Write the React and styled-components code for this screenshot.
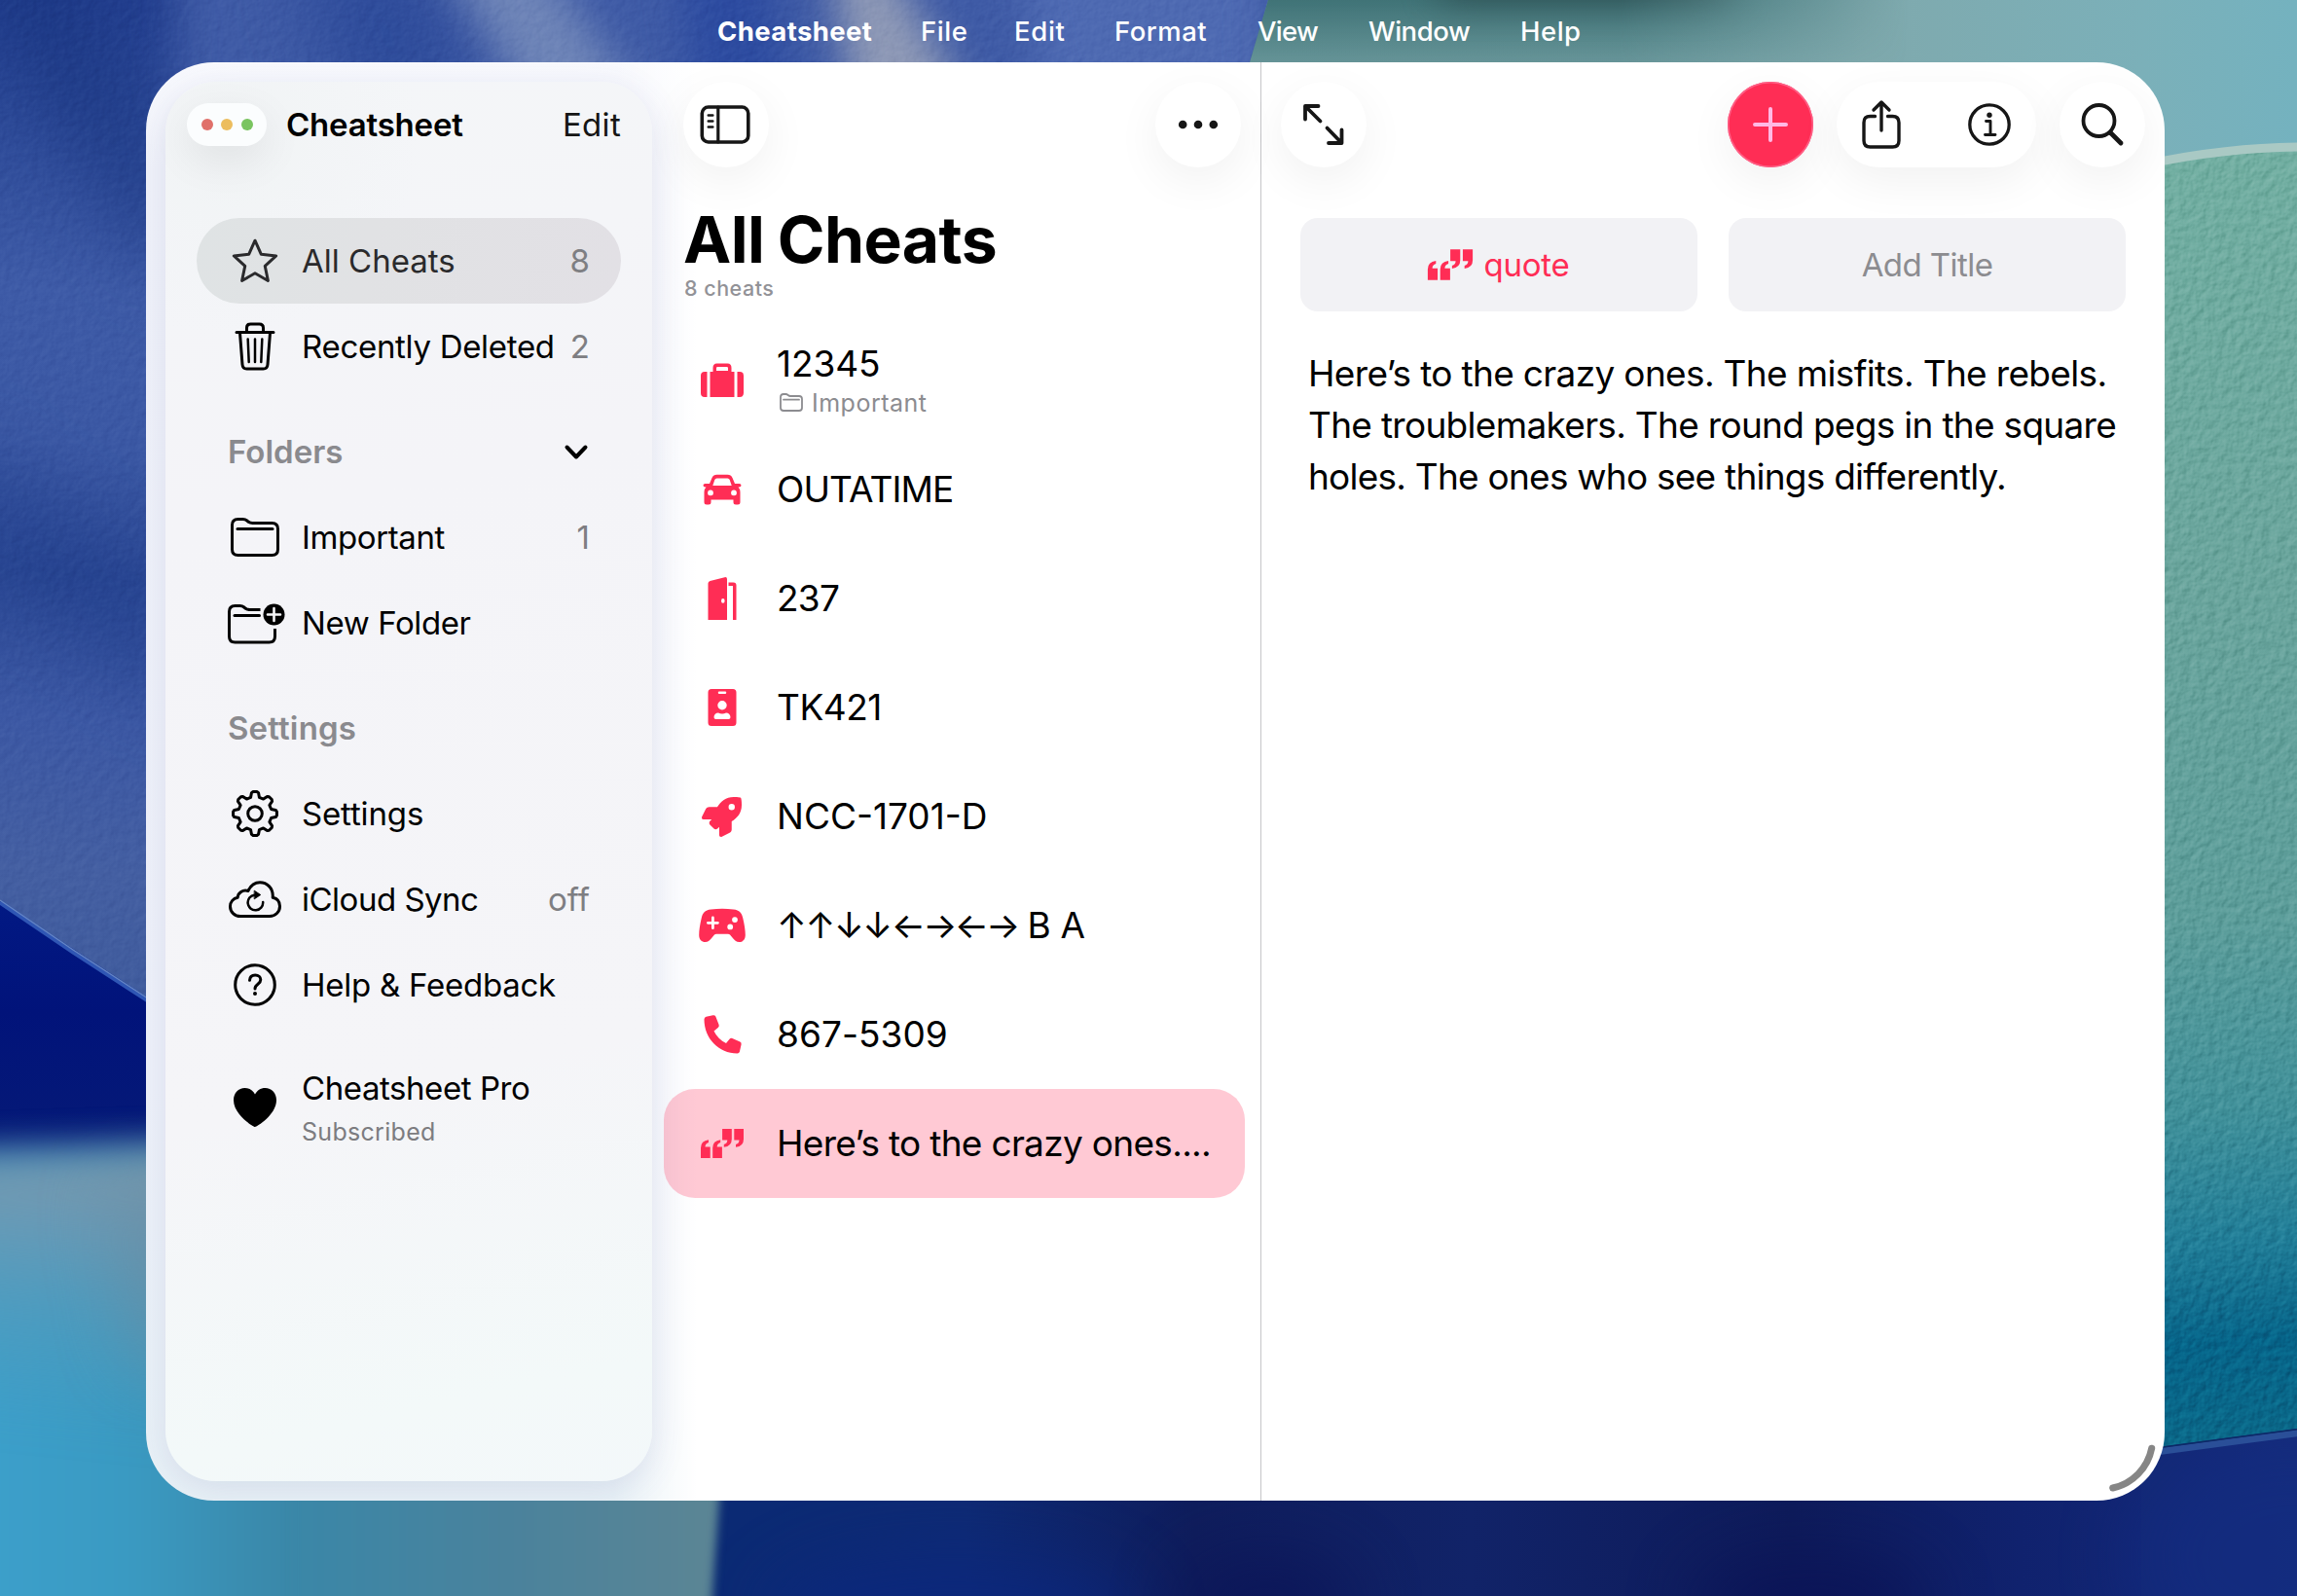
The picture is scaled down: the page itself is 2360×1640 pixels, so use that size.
import React from "react";
import styled, { createGlobalStyle, css } from "styled-components";
import { FaRocket } from "react-icons/fa";

const ACCENT = "#ff2d55";
const GRAY = "#8a8a8e";

const GlobalStyle = createGlobalStyle`
  * { box-sizing: border-box; }
  body {
    margin: 0;
    background: #12256b;
    color: #000;
    font-family: Inter, "Liberation Sans", sans-serif;
    -webkit-font-smoothing: antialiased;
  }
`;

/* ---------- layout shell ---------- */

const Desktop = styled.div`
  position: relative;
  width: 2360px;
  height: 1640px;
  overflow: hidden;
  isolation: isolate;
`;

const Wallpaper = styled.svg`
  position: absolute;
  inset: 0;
  z-index: -1;
  display: block;
`;

const MenuBar = styled.nav`
  display: grid;
  grid-template-columns: 209px 96px 103px 147px 114px 156px auto;
  align-items: center;
  height: 64px;
  padding-left: 737px;
`;

const MenuItem = styled.span`
  color: #fff;
  font-size: 27.5px;
  line-height: 64px;
  font-weight: ${(p) => (p.$bold ? 650 : 500)};
  letter-spacing: ${(p) => p.$track}px;
  white-space: nowrap;
`;

const Window = styled.main`
  position: relative;
  display: flex;
  width: 2074px;
  height: 1478px;
  margin-left: 150px;
  border-radius: 70px;
  overflow: hidden;
  background:
    linear-gradient(90deg, rgba(255, 255, 255, 0) 480px, #fff 566px),
    linear-gradient(180deg, #f9fafe 0, #f1f3fa 110px, #eff2fa 1050px, #e9f2f7 1478px);
`;

const Sidebar = styled.aside`
  display: flex;
  flex-direction: column;
  flex: none;
  width: 500px;
  margin: 20px 0 20px 20px;
  padding: 0 32px;
  border-radius: 52px;
  background:
    radial-gradient(circle at 60px 60px, rgba(240, 243, 244, 0.8), rgba(240, 243, 244, 0) 200px),
    linear-gradient(168deg, #f4f6f8 0, #f4f4f8 30%, #f5f5f8 70%, #f3f9f9 92%, #f3f8fa 100%);
  box-shadow: 0 8px 36px rgba(66, 78, 150, 0.13);
`;

const ListColumn = styled.section`
  display: flex;
  flex-direction: column;
  flex: none;
  width: 626px;
  padding-top: 20px;
  border-right: 1px solid #c5c5c8;
`;

const DetailColumn = styled.section`
  display: flex;
  flex-direction: column;
  flex: 1;
  padding-top: 20px;
`;

/* ---------- shared ---------- */

const Text = styled.span`
  font-size: ${(p) => p.$size || 33}px;
  font-weight: ${(p) => p.$weight || 400};
  letter-spacing: ${(p) => p.$track || 0}px;
  color: ${(p) => p.$color || "inherit"};
  white-space: nowrap;
`;

const Icon = styled.svg.attrs((p) => ({
  width: p.$w,
  height: p.$h,
  viewBox: `0 0 ${p.$w} ${p.$h}`,
}))`
  display: block;
  flex: none;
  overflow: visible;
  fill: ${(p) => (p.$solid ? "currentColor" : "none")};
  stroke: ${(p) => (p.$solid ? "none" : "currentColor")};
  stroke-width: ${(p) => p.$stroke || 3};
  stroke-linecap: round;
  stroke-linejoin: round;
`;

const glass = css`
  background: #fff;
  box-shadow: 0 14px 48px rgba(0, 0, 0, 0.06);
`;

const RoundButton = styled.div`
  display: flex;
  align-items: center;
  justify-content: center;
  width: 88px;
  height: 88px;
  border-radius: 44px;
  color: #161616;
  ${glass}
  ${(p) =>
    p.$primary &&
    css`
      background: ${ACCENT};
      color: #ffb9e4;
      box-shadow: inset 0 0 0 1.5px #ff5f86, 0 14px 48px rgba(0, 0, 0, 0.06);
    `}
`;

const ButtonPill = styled.div`
  display: flex;
  align-items: center;
  justify-content: space-between;
  width: 205px;
  height: 88px;
  padding: 0 26px 0 26px;
  border-radius: 44px;
  color: #161616;
  ${glass}
`;

const Toolbar = styled.header`
  display: flex;
  align-items: center;
  justify-content: space-between;
  flex: none;
  height: 88px;
  padding: ${(p) => p.$pad};
`;

const ToolGroup = styled.div`
  display: flex;
  gap: 24px;
`;

/* ---------- sidebar ---------- */

const SidebarHeader = styled.header`
  display: flex;
  align-items: center;
  flex: none;
  height: 88px;
  margin: 0 0 52px -10px;
`;

const TrafficLights = styled.div`
  display: flex;
  align-items: center;
  justify-content: center;
  gap: 8.5px;
  width: 82px;
  height: 44px;
  margin-right: 20px;
  border-radius: 22px;
  background: #fbfdfe;
  box-shadow: 0 14px 44px rgba(0, 0, 0, 0.08);
`;

const Light = styled.i`
  width: 12px;
  height: 12px;
  border-radius: 50%;
  background: ${(p) => p.$color};
`;

const EditLink = styled(Text)`
  margin-left: auto;
  color: #151515;
`;

const NavRow = styled.div`
  display: flex;
  align-items: center;
  flex: none;
  height: 88px;
  padding: 0 32px 0 30px;
  border-radius: 44px;
  ${(p) =>
    p.$active &&
    css`
      color: #2a2a2c;
      background: linear-gradient(100deg, #dfe3e4 0, #e1e2e4 40%, #e2e0e5 100%);
    `}
`;

const IconSlot = styled.span`
  display: flex;
  align-items: center;
  justify-content: center;
  flex: none;
  width: ${(p) => p.$w}px;
  margin-right: ${(p) => p.$gap}px;
  color: ${(p) => p.$color || "inherit"};
`;

const Trailing = styled(Text)`
  margin-left: auto;
  color: #7e7e82;
`;

const SectionHeader = styled.h2`
  display: flex;
  align-items: center;
  justify-content: space-between;
  flex: none;
  height: 88px;
  margin: 20px 0 0;
  padding: 0 34px 0 32px;
  font-weight: 600;
`;

const ProRow = styled(NavRow)`
  height: 124px;
  margin-top: 20px;
`;

const Stack = styled.div`
  display: flex;
  flex-direction: column;
  gap: ${(p) => p.$gap || 0}px;
`;

/* ---------- list ---------- */

const ListHeading = styled.div`
  display: flex;
  flex-direction: column;
  height: 163px;
  padding: 36px 0 0 32px;
`;

const Title = styled.h1`
  margin: 0;
  font-size: 66px;
  line-height: 76px;
  font-weight: 700;
  letter-spacing: -0.6px;
  word-spacing: -1.5px;
`;

const Count = styled.p`
  margin: 0 0 0 1px;
  font-size: 21.5px;
  line-height: 24px;
  font-weight: 550;
  letter-spacing: 0.5px;
  color: #929297;
`;

const CheatRow = styled.div`
  display: flex;
  align-items: center;
  flex: none;
  width: 597px;
  height: 112px;
  margin-left: 12px;
  padding-left: 30px;
  border-radius: 32px;
  background: ${(p) => (p.$active ? "rgba(255, 45, 85, 0.255)" : "transparent")};
`;

const CheatBody = styled(Stack)`
  padding-bottom: ${(p) => (p.$tall ? 0 : 2)}px;
`;

const Folder = styled.div`
  display: flex;
  align-items: center;
  gap: 9px;
  margin-left: 3px;
  color: #8c8c90;
  line-height: 36px;
`;

/* ---------- detail ---------- */

const Fields = styled.div`
  display: grid;
  grid-template-columns: 1fr 1fr;
  gap: 32px;
  margin: 52px 40px 37px;
`;

const Field = styled.div`
  display: flex;
  align-items: center;
  justify-content: center;
  gap: 13px;
  height: 96px;
  border-radius: 18px;
  background: #f2f2f5;
  color: ${(p) => p.$color};
`;

const Passage = styled.p`
  margin: 0 0 0 48px;
  font-size: 37px;
  line-height: 53px;
`;

const Line = styled.span`
  display: block;
  white-space: nowrap;
  letter-spacing: ${(p) => p.$track}px;
`;

const ResizeHandle = styled.svg`
  position: absolute;
  right: 8px;
  bottom: 8px;
`;

/* ---------- icons ---------- */

const polar = (cx, cy, r, deg) => {
  const a = ((deg - 90) * Math.PI) / 180;
  return `${(cx + r * Math.cos(a)).toFixed(2)} ${(cy + r * Math.sin(a)).toFixed(2)}`;
};

const starPath =
  "M" + Array.from({ length: 10 }, (_, i) => polar(24, 25, i % 2 ? 10.8 : 22.8, i * 36)).join("L") + "Z";

const gearPath =
  "M" +
  Array.from({ length: 8 }, (_, i) => {
    const a = i * 45;
    return [
      polar(24, 24, 17.2, a - 15),
      polar(24, 24, 21.6, a - 9.5),
      polar(24, 24, 22.5, a - 5),
      polar(24, 24, 22.5, a + 5),
      polar(24, 24, 21.6, a + 9.5),
      polar(24, 24, 17.2, a + 15),
    ].join("L");
  }).join("L") +
  "Z";

const StarIcon = () => (
  <Icon $w={48} $h={46} $stroke={3}><path d={starPath} /></Icon>
);
const TrashIcon = () => (
  <Icon $w={42} $h={50} $stroke={3}>
    <path d="M2 10.5H40M5.500 11L8 43.500Q8.300 48 12.500 48H29.500Q33.700 48 34 43.500L36.500 11M12.500 10V6Q12.500 2 16.500 2H25.500Q29.500 2 29.500 6V10" />
    <path d="M13.700 17.500L14.700 41M21 17.500V41M28.300 17.500L27.300 41" strokeWidth="2.500" />
  </Icon>
);
const FolderIcon = () => (
  <Icon $w={50} $h={40} $stroke={3}>
    <path d="M1.500 7.500Q1.500 1.500 7.500 1.500H12.500Q15 1.500 16.800 3L18.300 4.300Q20 5.500 22.500 5.500H42.500Q48.500 5.500 48.500 11.500V32.500Q48.500 38.500 42.500 38.500H7.500Q1.500 38.500 1.500 32.500Z" />
    <path d="M7 11.500H43" />
  </Icon>
);
const NewFolderIcon = () => (
  <Icon $w={56} $h={40} $stroke={3}>
    <path d="M33.500 6.500H22.500Q20 6.500 18.300 5.300L16.800 4Q15 2.500 12.500 2.500H7.500Q1.500 2.500 1.500 8.500V34Q1.500 40 7.500 40H42.500Q48.500 40 48.500 34V26" strokeLinecap="butt" />
    <path d="M7 12.500H32.500" />
    <circle cx="47.500" cy="11.500" r="11" fill="currentColor" stroke="none" />
    <path d="M47.500 5V18M41 11.500H54" stroke="#f5f5f8" strokeWidth="2.600" />
  </Icon>
);
const GearIcon = () => (
  <Icon $w={48} $h={48} $stroke={3}>
    <path d={gearPath} />
    <circle cx="24" cy="24" r="7.300" />
  </Icon>
);
const CloudIcon = () => (
  <Icon $w={54} $h={38} $stroke={3}>
    <path d="M12 36.500C6 36.500 1.500 32 1.500 26.500C1.500 21.800 4.700 18.300 9.200 17.300C9.300 12.500 14.500 8.800 20 10.500C22.500 5 26.800 1.800 32 1.800C39.500 1.800 45.200 7.500 45.300 15.500L45.200 17.300C49.700 18.300 52.500 21.800 52.500 26.300C52.500 32 48 36.500 42 36.500Z" />
    <path d="M26.500 14.700A7.800 7.800 0 1 0 35.200 22" strokeWidth="2.500" />
    <path d="M26.500 10.300L32.800 14.500L26.500 18.700Z" fill="currentColor" strokeWidth="0.800" />
  </Icon>
);
const HelpIcon = () => (
  <Icon $w={44} $h={44} $stroke={3}>
    <circle cx="22" cy="22" r="20.300" />
    <path d="M16.500 17.300C16.700 13.800 19 12 22.200 12C25.600 12 27.800 14 27.800 16.800C27.800 21.500 22 21 22 26" />
    <circle cx="22" cy="31" r="2" fill="currentColor" stroke="none" />
  </Icon>
);
const HeartIcon = () => (
  <Icon $w={44} $h={40} $solid>
    <path d="M22 40C20.500 40 0 27.500 0 12.500C0 5 5 0 11.500 0C16.500 0 20 2.700 22 6.500C24 2.700 27.500 0 32.500 0C39 0 44 5 44 12.500C44 27.500 23.500 40 22 40Z" />
  </Icon>
);
const ChevronIcon = () => (
  <Icon $w={24} $h={12} $stroke={4}><path d="M2.500 1.500L12 11.500L21.500 1.500" /></Icon>
);
const SidebarIcon = () => (
  <Icon $w={52} $h={40} $stroke={3.600}>
    <g transform="translate(-0.700 0)">
      <rect x="2" y="2" width="47.500" height="36" rx="6.500" />
      <path d="M18.500 2V38" strokeWidth="3.200" />
      <path d="M8.500 10.500H13M8.500 16.500H13M8.500 22.500H13" strokeWidth="2.600" />
    </g>
  </Icon>
);
const MoreIcon = () => (
  <Icon $w={42} $h={10} $solid>
    <circle cx="5.200" cy="5" r="4.300" /><circle cx="21" cy="5" r="4.300" /><circle cx="36.800" cy="5" r="4.300" />
  </Icon>
);
const ExpandIcon = () => (
  <Icon $w={42} $h={42} $stroke={3.800}>
    <path d="M2 15.500V2H15.500M2 2L17.500 17.500M39.500 26.500V40H26M39.500 40L24.500 24.500" />
  </Icon>
);
const PlusIcon = () => (
  <Icon $w={36} $h={36} $stroke={4}><path d="M18 2V34M2 18H34" /></Icon>
);
const ShareIcon = () => (
  <Icon $w={40} $h={52} $stroke={3.400}>
    <path d="M13.500 17.500H8.500Q2 17.500 2 24V42.500Q2 49 8.500 49H31.500Q38 49 38 42.500V24Q38 17.500 31.500 17.500H26.500M20 32V3.500M12 11L20 3L28 11" />
  </Icon>
);
const InfoIcon = () => (
  <Icon $w={44} $h={44} $stroke={3.300}>
    <circle cx="22" cy="22" r="20.200" />
    <path d="M18.500 18.500H23V32M17.500 32.500H28" strokeWidth="2.900" />
    <circle cx="22" cy="12.300" r="2.700" fill="currentColor" stroke="none" />
  </Icon>
);
const SearchIcon = () => (
  <Icon $w={44} $h={44} $stroke={3.800}>
    <circle cx="18.500" cy="18" r="16" />
    <path d="M30.500 30.500L41 41" strokeWidth="4.800" />
  </Icon>
);

const SuitcaseIcon = () => (
  <Icon $w={44} $h={36} $solid>
    <path d="M6.500 9V35H4Q0 35 0 31V13Q0 9 4 9ZM37.500 9V35H40Q44 35 44 31V13Q44 9 40 9Z" />
    <path fillRule="evenodd" d="M9.500 9H12.500V5Q12.500 0.500 16.500 0.500H27.500Q31.500 0.500 31.500 5V9H34.500V35H9.500ZM16 8H28V5.300Q28 4 26.700 4H17.300Q16 4 16 5.300Z" />
  </Icon>
);
const CarIcon = () => (
  <Icon $w={40} $h={32} $solid>
    <path fillRule="evenodd" d="M7 10L9.500 4Q11 0.800 14.500 0.800H25.500Q29 0.800 30.500 4L33 10H37.500Q39.500 10 39.500 11.800Q39.500 13.500 37.500 13.500H36.500Q38.500 15.500 38.500 18.500V29Q38.500 31.500 36 31.500H34Q31.500 31.500 31.500 29V26.500H8.500V29Q8.500 31.500 6 31.500H4Q1.500 31.500 1.500 29V18.500Q1.500 15.500 3.500 13.500H2.500Q0.500 13.500 0.500 11.800Q0.500 10 2.500 10ZM10.300 12H29.700L27.700 6Q27.200 4.500 25.500 4.500H14.500Q12.800 4.500 12.300 6ZM8 16.500A2.900 2.900 0 1 0 8 22.300A2.900 2.900 0 1 0 8 16.500ZM32 16.500A2.900 2.900 0 1 0 32 22.300A2.900 2.900 0 1 0 32 16.500Z" />
  </Icon>
);
const DoorIcon = () => (
  <Icon $w={30} $h={44} $solid>
    <path fillRule="evenodd" d="M0.500 44V6.500Q0.500 4.500 2.500 4L17.500 0.200Q20 -0.300 20 2V44ZM15.800 22A1.800 2.400 0 1 0 15.800 26.800A1.800 2.400 0 1 0 15.800 22Z" />
    <path d="M21.500 5.500H26.500Q29.500 5.500 29.500 8.500V44H26V9H21.500Z" />
  </Icon>
);
const BadgeIcon = () => (
  <Icon $w={30} $h={38} $solid>
    <path fillRule="evenodd" d="M4 0H26Q29.500 0 29.500 3.500V34.500Q29.500 38 26 38H4Q0.500 38 0.500 34.500V3.500Q0.500 0 4 0ZM12 2.500A1.200 1.200 0 0 0 12 5H18A1.200 1.200 0 0 0 18 2.500ZM15 12A4.700 4.700 0 1 0 15 21.400A4.700 4.700 0 1 0 15 12ZM8.500 31H21.500Q23.500 31 23.500 29C23.500 26.500 21.500 24.500 19 24.500Q17 25.500 15 25.500Q13 25.500 11 24.500C8.500 24.500 6.500 26.500 6.500 29Q6.500 31 8.500 31Z" />
  </Icon>
);
const GamepadIcon = () => (
  <Icon $w={48} $h={34} $solid>
    <path fillRule="evenodd" d="M12.500 0.500Q24 -0.800 35.500 0.500C42 1.200 44 4 45.300 9.500C46.800 16 47.800 22 47.800 27C47.800 31.500 45 34 41.500 34C38.500 34 36.500 32.200 34.500 29.500L32 26.500Q31.200 25.700 30 25.700H18Q16.800 25.700 16 26.500L13.500 29.500C11.500 32.200 9.500 34 6.500 34C3 34 0.200 31.500 0.200 27C0.200 22 1.200 16 2.700 9.500C4 4 6 1.200 12.500 0.500ZM13 9V13H9.300Q8 13 8 14.300Q8 15.700 9.300 15.700H13V19.500Q13 21 14.400 21Q15.800 21 15.800 19.500V15.700H19.500Q20.800 15.700 20.800 14.300Q20.800 13 19.500 13H15.800V9Q15.800 7.600 14.400 7.600Q13 7.600 13 9ZM37 8.200A2.900 2.900 0 1 0 37 14A2.900 2.900 0 1 0 37 8.200ZM32.200 15.500A2.900 2.900 0 1 0 32.200 21.300A2.900 2.900 0 1 0 32.200 15.500Z" />
  </Icon>
);
const RocketIcon = styled(FaRocket)`
  width: 41px;
  height: 41px;
  margin-right: 2px;
`;
const PhoneIcon = () => (
  <Icon $w={39} $h={40} $solid>
    <path d="M2.500 1.800L9.500 0.200Q11.500 -0.200 12.300 1.600L15.600 10Q16.200 11.800 14.700 13L10.500 16.500C13 21.800 17.500 26.300 23 29L26.500 24.800Q27.700 23.400 29.400 24.100L37.300 27.500Q39 28.300 38.600 30.200L36.900 37.700Q36.400 39.500 34.500 39.500C15.500 39.500 0.500 24 0.500 4.500Q0.500 2.300 2.500 1.800Z" />
  </Icon>
);
const QuoteIcon = ({ scale = 1 }) => (
  <Icon $w={44} $h={30} $solid>
    <g transform={`translate(${22 - 22 * scale} ${15 - 15 * scale}) scale(${scale})`}>
      <path d="M0 30V19.500Q0 12.200 8 11.200V14Q4.500 15 4.500 18.500H9.700V30ZM12.200 30V19.500Q12.200 12.200 20.200 11.200V14Q16.700 15 16.700 18.500H21.900V30Z" />
      <path d="M31.800 0V10.500Q31.800 17.800 23.800 18.800V16Q27.300 15 27.300 11.500H22.100V0ZM44 0V10.500Q44 17.800 36 18.800V16Q39.500 15 39.500 11.500H34.300V0Z" />
    </g>
  </Icon>
);
const SmallFolderIcon = () => (
  <Icon $w={24} $h={19} $stroke={1.800}>
    <path d="M1 4Q1 1 4 1H6.500Q7.500 1 8.300 1.700L9 2.300Q9.800 3 11 3H20Q23 3 23 6V15Q23 18 20 18H4Q1 18 1 15ZM4 6.700H20" />
  </Icon>
);

/* ---------- data ---------- */

const menus = [
  ["Cheatsheet", 0.4], ["File", 0.55], ["Edit", 0.7], ["Format", 0.5], ["View", -0.7], ["Window", -0.45], ["Help", 0.5],
];

const cheats = [
  { icon: <SuitcaseIcon />, label: "12345", track: -0.1, folder: "Important" },
  { icon: <CarIcon />, label: "OUTATIME", track: -0.88 },
  { icon: <DoorIcon />, label: "237", track: -0.7 },
  { icon: <BadgeIcon />, label: "TK421", track: -0.5 },
  { icon: <RocketIcon />, label: "NCC-1701-D", track: 0 },
  {
    icon: <GamepadIcon />,
    label: (
      <>
        <Text $size={37} $track={-1.4}>↑↑↓↓</Text>
        <Text $size={37} $track={-2.9}>←→←→</Text> B A
      </>
    ),
    track: -0.3,
  },
  { icon: <PhoneIcon />, label: "867-5309", track: 0.05 },
  { icon: <QuoteIcon />, label: "Here’s to the crazy ones....", track: -0.69, active: true },
];

const NavItem = ({ icon, label, track, trailing, active }) => (
  <NavRow $active={active}>
    <IconSlot $w={59} $gap={19}>{icon}</IconSlot>
    <Text $track={track}>{label}</Text>
    {trailing && <Trailing>{trailing}</Trailing>}
  </NavRow>
);

const blurRegion = { filterUnits: "userSpaceOnUse", x: -300, y: -300, width: 2960, height: 2240, colorInterpolationFilters: "sRGB" };

const WallpaperArt = () => (
  <Wallpaper width="2360" height="1640" viewBox="0 0 2360 1640">
    <defs>
      <linearGradient id="blue" gradientUnits="userSpaceOnUse" x1="30" y1="0" x2="-60" y2="1040">
        <stop offset="0" stopColor="#233f8f" />
        <stop offset="0.100" stopColor="#2b4896" />
        <stop offset="0.280" stopColor="#3e5ba7" />
        <stop offset="0.430" stopColor="#3b58a4" />
        <stop offset="0.560" stopColor="#2b4894" />
        <stop offset="0.700" stopColor="#3c58a4" />
        <stop offset="0.850" stopColor="#445fa2" />
        <stop offset="1" stopColor="#3f5b9c" />
      </linearGradient>
      <linearGradient id="navyLeft" x1="0" y1="0" x2="0" y2="1">
        <stop offset="0" stopColor="#021a86" />
        <stop offset="0.350" stopColor="#01137a" />
        <stop offset="1" stopColor="#0a2074" />
      </linearGradient>
      <linearGradient id="tealTop" gradientUnits="userSpaceOnUse" x1="1300" y1="0" x2="2360" y2="0">
        <stop offset="0" stopColor="#6b999c" />
        <stop offset="0.350" stopColor="#6d9a9e" />
        <stop offset="0.580" stopColor="#7fa9ad" />
        <stop offset="0.850" stopColor="#7bb0b9" />
        <stop offset="1" stopColor="#74b2bf" />
      </linearGradient>
      <linearGradient id="topShade" gradientUnits="userSpaceOnUse" x1="0" y1="0" x2="0" y2="74">
        <stop offset="0" stopColor="#386c70" stopOpacity="0.850" />
        <stop offset="1" stopColor="#386c70" stopOpacity="0" />
      </linearGradient>
      <linearGradient id="shadeFade" gradientUnits="userSpaceOnUse" x1="1300" y1="0" x2="1960" y2="0">
        <stop offset="0" stopColor="#fff" />
        <stop offset="0.550" stopColor="#fff" />
        <stop offset="1" stopColor="#000" />
      </linearGradient>
      <mask id="shadeMask" maskUnits="userSpaceOnUse" x="1200" y="0" width="1160" height="90">
        <rect x="1200" width="1160" height="90" fill="url(#shadeFade)" />
      </mask>
      <linearGradient id="tealRight" gradientUnits="userSpaceOnUse" x1="2240" y1="150" x2="2330" y2="1470">
        <stop offset="0" stopColor="#72afa2" />
        <stop offset="0.350" stopColor="#6aa59d" />
        <stop offset="0.600" stopColor="#5d9e9b" />
        <stop offset="0.750" stopColor="#41919a" />
        <stop offset="0.850" stopColor="#217e98" />
        <stop offset="0.930" stopColor="#066489" />
        <stop offset="1" stopColor="#0a6889" />
      </linearGradient>
      <linearGradient id="navyBottom" x1="0" y1="0" x2="1" y2="0">
        <stop offset="0" stopColor="#0b2a74" />
        <stop offset="0.320" stopColor="#0b2a74" />
        <stop offset="0.420" stopColor="#0e2a74" />
        <stop offset="0.520" stopColor="#0f1d5c" />
        <stop offset="0.640" stopColor="#112368" />
        <stop offset="0.780" stopColor="#0e1b5a" />
        <stop offset="0.880" stopColor="#10226e" />
        <stop offset="1" stopColor="#142a7a" />
      </linearGradient>
      <linearGradient id="aqua" gradientUnits="userSpaceOnUse" x1="0" y1="0" x2="745" y2="0">
        <stop offset="0" stopColor="#3c9fca" />
        <stop offset="0.180" stopColor="#3a9ac2" />
        <stop offset="0.400" stopColor="#3a87a8" />
        <stop offset="0.700" stopColor="#4a829c" />
        <stop offset="1" stopColor="#5c8594" />
      </linearGradient>
      <linearGradient id="haze" gradientUnits="userSpaceOnUse" x1="80" y1="1180" x2="50" y2="1470">
        <stop offset="0" stopColor="#7997ab" />
        <stop offset="0.250" stopColor="#7299b2" stopOpacity="0.850" />
        <stop offset="0.600" stopColor="#6599b4" stopOpacity="0.400" />
        <stop offset="1" stopColor="#5a98b4" stopOpacity="0" />
      </linearGradient>
      <filter id="soft" {...blurRegion}><feGaussianBlur stdDeviation="36" /></filter>
      <filter id="mid" {...blurRegion}><feGaussianBlur stdDeviation="20" /></filter>
      <filter id="edge" {...blurRegion}><feGaussianBlur stdDeviation="5" /></filter>
      <filter id="paper" x="0" y="0" width="100%" height="100%" colorInterpolationFilters="sRGB">
        <feTurbulence type="fractalNoise" baseFrequency="0.110" numOctaves="3" seed="4" />
        <feDiffuseLighting surfaceScale="1.600" lightingColor="#ffffff"><feDistantLight azimuth="225" elevation="30" /></feDiffuseLighting>
      </filter>
      <clipPath id="tealClip"><path d="M2180 175Q2270 150 2360 148V1468L2180 1492Z" /></clipPath>
      <clipPath id="blueClip"><path d="M0 0H1304L1284 80H200V1056L150 1024L0 926Z" /></clipPath>
    </defs>

    <rect width="2360" height="1640" fill="url(#navyBottom)" />
    <ellipse cx="2360" cy="1600" rx="170" ry="130" fill="#122c86" opacity="0.600" filter="url(#soft)" />
    <ellipse cx="980" cy="1660" rx="190" ry="60" fill="#0b277e" opacity="0.800" filter="url(#soft)" />
    <ellipse cx="1860" cy="1650" rx="120" ry="50" fill="#0a1256" opacity="0.800" filter="url(#soft)" />
    <ellipse cx="1300" cy="1650" rx="90" ry="50" fill="#0a1256" opacity="0.700" filter="url(#soft)" />

    <path d="M0 900H400V1300H0Z" fill="url(#navyLeft)" />
    <path d="M-100 1192L420 1176V1720H-100Z" fill="url(#aqua)" filter="url(#mid)" />
    <path d="M300 1400H751Q738 1540 728 1700H300Z" fill="url(#aqua)" filter="url(#edge)" />
    <path d="M-100 1192L420 1176V1480H-100Z" fill="url(#haze)" filter="url(#mid)" />
    <path d="M110 1215H300V1400H140Z" fill="#6c8ba0" opacity="0.550" filter="url(#soft)" />

    <g clipPath="url(#blueClip)">
      <rect width="1320" height="1060" fill="url(#blue)" />
      <path d="M180 -80H1320V110H180Z" fill="#3f5ba6" filter="url(#mid)" />
      <path d="M-60 -60L60 -60L190 200L170 300Z" fill="#16327c" opacity="0.500" filter="url(#soft)" />
      <path d="M300 -60L430 -60L500 130L360 130Z" fill="#2a4898" opacity="0.800" filter="url(#soft)" />
      <path d="M440 -60L540 -60L680 130L560 130Z" fill="#8296bf" opacity="0.700" filter="url(#mid)" />
      <path d="M690 -60L780 -60L820 130L720 130Z" fill="#2b4aa0" opacity="0.900" filter="url(#mid)" />
      <path d="M850 -60L900 -60L1010 130L880 130Z" fill="#97a0b8" opacity="0.900" filter="url(#mid)" />
      <path d="M1040 -60H1300V130H1080Z" fill="#506cb4" opacity="0.900" filter="url(#mid)" />
      <path d="M-40 440L200 630V740L-40 570Z" fill="#1c3a88" opacity="0.350" filter="url(#soft)" />
      <rect width="1320" height="1060" filter="url(#paper)" opacity="0.140" style={{ mixBlendMode: "soft-light" }} />
    </g>
    <path d="M0 927L75 978L152 1028" fill="none" stroke="#2f56b4" strokeWidth="5" />
    <path d="M0 925L75 976L152 1026" fill="none" stroke="#7f9bcb" strokeWidth="1.200" opacity="0.700" />

    <path d="M1303 0H2360V300H1214Z" fill="url(#tealTop)" />
    <g mask="url(#shadeMask)">
      <path d="M1303 0H2000V76H1280Z" fill="url(#topShade)" />
      <path d="M1480 -60H1780V-2H1480Z" fill="#263f42" opacity="0.800" filter="url(#mid)" />
    </g>
    <g clipPath="url(#tealClip)">
      <rect x="2180" y="140" width="180" height="1360" fill="url(#tealRight)" />
      <rect x="2180" y="140" width="180" height="1360" filter="url(#paper)" opacity="0.400" style={{ mixBlendMode: "soft-light" }} />
    </g>
    <path d="M2200 170Q2280 152 2365 151" fill="none" stroke="#a9c9c4" strokeWidth="9" />
    <path d="M2200 1493L2360 1471V1640H2200Z" fill="#162f7c" opacity="0.300" />
    <path d="M2200 1494L2365 1472" fill="none" stroke="#2a4f98" strokeWidth="7" />
    <path d="M2200 1490L2365 1468" fill="none" stroke="#0d2a66" strokeWidth="1.500" />
  </Wallpaper>
);

export default function App() {
  return (
    <>
      <GlobalStyle />
      <Desktop>
        <WallpaperArt />
        <MenuBar>
          {menus.map(([label, track], i) => (
            <MenuItem key={label} $bold={i === 0} $track={track}>{label}</MenuItem>
          ))}
        </MenuBar>

        <Window>
          <Sidebar>
            <SidebarHeader>
              <TrafficLights>
                <Light $color="#e0706a" /><Light $color="#ecbd5e" /><Light $color="#7ac460" />
              </TrafficLights>
              <Text $weight={600} $track={-0.2}>Cheatsheet</Text>
              <EditLink $track={0.3}>Edit</EditLink>
            </SidebarHeader>

            <NavItem active icon={<StarIcon />} label="All Cheats" track={0} trailing="8" />
            <NavItem icon={<TrashIcon />} label="Recently Deleted" track={-0.3} trailing="2" />

            <SectionHeader>
              <Text $weight={600} $color={GRAY}>Folders</Text>
              <ChevronIcon />
            </SectionHeader>
            <NavItem icon={<FolderIcon />} label="Important" track={-0.4} trailing="1" />
            <NavItem icon={<NewFolderIcon />} label="New Folder" track={-0.4} />

            <SectionHeader>
              <Text $weight={600} $color={GRAY} $track={0.15}>Settings</Text>
            </SectionHeader>
            <NavItem icon={<GearIcon />} label="Settings" track={-0.15} />
            <NavItem icon={<CloudIcon />} label="iCloud Sync" track={-0.5} trailing="off" />
            <NavItem icon={<HelpIcon />} label="Help & Feedback" track={-0.25} />

            <ProRow>
              <IconSlot $w={59} $gap={19}><HeartIcon /></IconSlot>
              <Stack $gap={10}>
                <Text $track={-0.43}>Cheatsheet Pro</Text>
                <Text $size={25} $track={0.3} $color="#7c7c80">Subscribed</Text>
              </Stack>
            </ProRow>
          </Sidebar>

          <ListColumn>
            <Toolbar $pad="0 20px 0 32px">
              <RoundButton><SidebarIcon /></RoundButton>
              <RoundButton><MoreIcon /></RoundButton>
            </Toolbar>
            <ListHeading>
              <Title>All Cheats</Title>
              <Count>8 cheats</Count>
            </ListHeading>
            {cheats.map((c, i) => (
              <CheatRow key={i} $active={c.active}>
                <IconSlot $w={60} $gap={26} $color={ACCENT}>{c.icon}</IconSlot>
                <CheatBody $tall={Boolean(c.folder)}>
                  <Text $size={37} $track={c.track}>{c.label}</Text>
                  {c.folder && (
                    <Folder>
                      <SmallFolderIcon />
                      <Text $size={25} $track={0.5}>{c.folder}</Text>
                    </Folder>
                  )}
                </CheatBody>
              </CheatRow>
            ))}
          </ListColumn>

          <DetailColumn>
            <Toolbar $pad="0 20px">
              <RoundButton><ExpandIcon /></RoundButton>
              <ToolGroup>
                <RoundButton $primary><PlusIcon /></RoundButton>
                <ButtonPill><ShareIcon /><InfoIcon /></ButtonPill>
                <RoundButton><SearchIcon /></RoundButton>
              </ToolGroup>
            </Toolbar>
            <Fields>
              <Field $color={ACCENT}>
                <QuoteIcon scale={1.050} />
                <Text $track={-0.25}>quote</Text>
              </Field>
              <Field $color="#8c8c90"><Text $track={-0.57}>Add Title</Text></Field>
            </Fields>
            <Passage>
              <Line $track={-0.66}>Here’s to the crazy ones. The misfits. The rebels.</Line>
              <Line $track={-0.7}>The troublemakers. The round pegs in the square</Line>
              <Line $track={-0.76}>holes. The ones who see things differently.</Line>
            </Passage>
          </DetailColumn>

          <ResizeHandle width="60" height="60" viewBox="0 0 60 60" fill="none">
            <path d="M54.700 14.300A52 52 0 0 1 14.700 55" stroke="#868686" strokeWidth="7" strokeLinecap="round" />
          </ResizeHandle>
        </Window>
      </Desktop>
    </>
  );
}
